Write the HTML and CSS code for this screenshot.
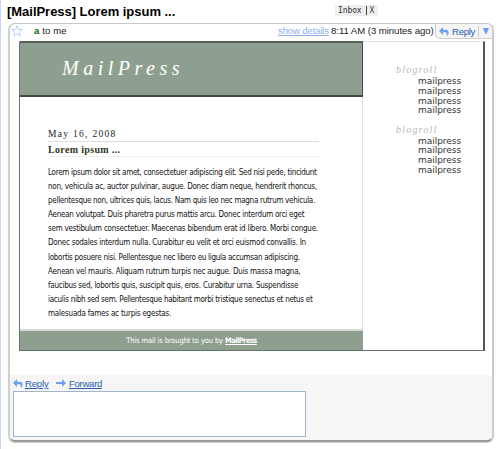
FILE: index.html
```html
<!DOCTYPE html>
<html lang="en">
<head>
<meta charset="utf-8">
<title>[MailPress] Lorem ipsum ...</title>
<link rel="stylesheet" href="styles.css">
</head>
<body>
<div class="page">
  <header class="subject">
    <h1>[MailPress] Lorem ipsum ...</h1>
    <div class="label"><span>Inbox</span><i></i><span>X</span></div>
  </header>
  <main class="card">
    <div class="bar">
      <svg class="star" viewBox="0 0 12 12"><path d="M6 .8 7.4 4.4 11.3 4.6 8.3 7.1 9.3 11 6 8.8 2.7 11 3.7 7.1 .7 4.6 4.6 4.4Z"/></svg>
      <div class="from"><b>a</b> to me</div>
      <div class="time"><a>show details</a><span>8:11 AM (3 minutes ago)</span></div>
      <div class="action">
        <svg class="arrow" viewBox="0 0 10 9"><path d="M0 4 4 0V2.8H6.5Q10 3 9.7 6.2L8.8 8.6H7.5Q8.7 5.2 6 5.2H4V8Z"/></svg>
        <span>Reply</span><i></i>
        <svg class="caret" viewBox="0 0 6 6"><path d="M0 0H6L3.5 6H2.5Z"/></svg>
      </div>
    </div>
    <div class="mail">
      <div class="left">
        <div class="banner">MailPress</div>
        <article class="post">
          <div class="date">May 16, 2008</div>
          <h2><span>Lorem ipsum ...</span></h2>
          <p>
            <span class="snug">Lorem ipsum dolor sit amet, consectetuer adipiscing elit. Sed nisi pede, tincidunt</span>
            <span>non, vehicula ac, auctor pulvinar, augue. Donec diam neque, hendrerit rhoncus,</span>
            <span class="snug">pellentesque non, ultrices quis, lacus. Nam quis leo nec magna rutrum vehicula.</span>
            <span>Aenean volutpat. Duis pharetra purus mattis arcu. Donec interdum orci eget</span>
            <span>sem vestibulum consectetuer. Maecenas bibendum erat id libero. Morbi congue.</span>
            <span>Donec sodales interdum nulla. Curabitur eu velit et orci euismod convallis. In</span>
            <span class="snug">lobortis posuere nisi. Pellentesque nec libero eu ligula accumsan adipiscing.</span>
            <span class="loose">Aenean vel mauris. Aliquam rutrum turpis nec augue. Duis massa magna,</span>
            <span>faucibus sed, lobortis quis, suscipit quis, eros. Curabitur urna. Suspendisse</span>
            <span class="snug">iaculis nibh sed sem. Pellentesque habitant morbi tristique senectus et netus et</span>
            <span class="loose">malesuada fames ac turpis egestas.</span>
          </p>
        </article>
        <footer class="foot"><span>This mail is brought to you by <b>MailPress</b></span></footer>
      </div>
      <aside class="side">
        <h3>blogroll</h3>
        <ul><li>mailpress</li><li>mailpress</li><li>mailpress</li><li>mailpress</li></ul>
        <h3>blogroll</h3>
        <ul><li>mailpress</li><li>mailpress</li><li>mailpress</li><li>mailpress</li></ul>
      </aside>
    </div>
    <div class="respond">
      <div class="links">
        <svg class="arrow" viewBox="0 0 10 9"><path d="M0 4 4 0V2.8H6.5Q10 3 9.7 6.2L8.8 8.6H7.5Q8.7 5.2 6 5.2H4V8Z"/></svg>
        <a class="reply">Reply</a>
        <svg class="fwd" viewBox="0 0 10 8"><path d="M0 3H6V0L10 4 6 8V5H0Z"/></svg>
        <a class="forward">Forward</a>
      </div>
      <div class="box"></div>
    </div>
  </main>
</div>
</body>
</html>
```
FILE: styles.css
```css
* { box-sizing: border-box; }
body { margin: 0; background: #fff; font-family: "Liberation Sans", sans-serif; color: #000; }
h1, h2, h3, p, ul { margin: 0; padding: 0; font-weight: normal; list-style: none; }
.page { height: 449px; border-left: 1px solid #ccd6f3; padding-left: 7px; white-space: nowrap; overflow: hidden; }
.subject { height: 23px; display: flex; }
h1 { width: 327px; margin-left: -1px; font-size: 13px; font-weight: bold; line-height: 23px; letter-spacing: -.03px; }
.label { height: 11px; margin-top: 5px; margin-left: 1px; width: 43px; background: #eee; border-radius: 2px; display: flex; align-items: center; padding-left: 3px; font: 8px/11px "DejaVu Sans Mono", monospace; letter-spacing: -.1px; color: #333; }
.label i { width: 1px; height: 9px; background: #444; margin: 0 3px 0 4px; }

.card { width: 486px; height: 419px; border: 1px solid #c8c8c8; border-left: 2px solid #d0d0d0; border-right: 2px solid #ccc; border-bottom: 2px solid #999; border-radius: 7px; box-shadow: 0 1px 1px #ccc; display: flex; flex-direction: column; overflow: hidden; }
.bar { height: 17px; display: flex; font-size: 9.6px; line-height: 13px; color: #222; }
.star { width: 12px; height: 12px; margin: 1px 0 0 1px; fill: #fff; stroke: #b4d0fa; stroke-width: 1; flex: none; }
.from { margin-left: 11px; width: 244px; letter-spacing: .1px; flex: none; }
.from b { color: #00681c; }
.time { width: 157px; flex: none; display: flex; }
.time a { width: 53px; color: #8fb0e8; text-decoration: underline; letter-spacing: -.15px; }
.time span { letter-spacing: -.05px; }
.action { flex: 1; height: 15px; border: 1px solid #ccc; border-top: 0; border-right: 0; border-bottom-left-radius: 5px; background: #f5f5f5; display: flex; align-items: center; padding-left: 3px; color: #2a5db0; }
.action span { margin-left: 3px; letter-spacing: -.3px; }
.action i { width: 1px; height: 11px; background: #ccc; margin: 0 4px 0 3px; }
.arrow { width: 10px; height: 9px; fill: #6e9ff5; flex: none; }
.caret { width: 6px; height: 6px; fill: #6c9df4; flex: none; }

.mail { margin-left: 9px; width: 466px; height: 310px; border: 1px solid #63746a; border-right: 2px solid #4c5b50; border-top-color: #dfe3e0; display: flex; }
.left { width: 343px; margin-top: -1px; border-right: 1px solid #e3e3e3; display: flex; flex-direction: column; }
.banner { height: 56px; margin-right: -1px; background: #8f9f8f; border-top: 2px solid #566458; border-bottom: 2px solid #424844; border-right: 1px solid #424844; padding-left: 42px; color: #fff; font: italic 20px/51px "Liberation Serif", serif; letter-spacing: 4.5px; }
.post { height: 232px; padding: 31px 43px 0 28px; }
.date { height: 14px; border-bottom: 1px solid #ddd; font: 9.5px/13px "Liberation Serif", serif; letter-spacing: 1.3px; color: #222; }
h2 { height: 15px; border-bottom: 1px solid #eee; font: bold 10px/15px "Liberation Serif", serif; color: #2c3820; letter-spacing: .33px; }
.post p { padding-top: 9px; font: 8px/14.1px "DejaVu Sans Condensed", sans-serif; letter-spacing: -.255px; color: #111; }
.post p span { display: table; }
.post p .snug { letter-spacing: -.29px; }
.post p .loose { letter-spacing: -.21px; }
.foot { flex: 1; margin-right: -1px; border-top: 2px solid #d2dcd4; background: #8f9f8f; color: #fff; text-align: center; font: 7.5px/19px "DejaVu Sans Condensed", sans-serif; letter-spacing: -.12px; }
.foot b { text-decoration: underline; letter-spacing: -.55px; }
.side { padding: 22px 0 0 33px; }
h3 { height: 13px; font: italic 10px/11px "Liberation Serif", serif; letter-spacing: 1.2px; color: #b8b8b8; }
ul { padding-left: 22px; margin-bottom: 7.5px; }
li { font: 9px/9.75px "DejaVu Sans", sans-serif; letter-spacing: -.03px; height: 9.75px; color: #333; }

.respond { margin-top: 24px; flex: 1; background: #f6f6f6; padding: 0 0 0 3px; }
.links { height: 16px; display: flex; align-items: center; font-size: 9.6px; color: #2a5db0; }
.links a { line-height: 16px; text-decoration: underline; padding-top: 2px; letter-spacing: -.2px; }
.reply { margin-left: 2px; width: 31px; }
.fwd { width: 10px; height: 8px; fill: #6e9ff5; margin-right: 3px; }
.links .forward { letter-spacing: -.3px; }
.box { width: 293px; height: 46px; border: 1px solid #a0b4cc; background: #fff; }
```
